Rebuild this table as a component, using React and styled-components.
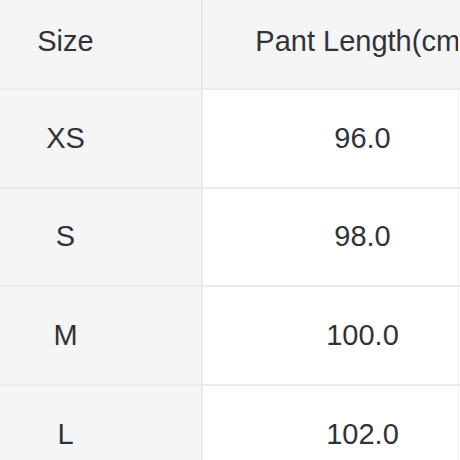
import { Fragment } from "react";
import styled, { createGlobalStyle } from "styled-components";

const GlobalStyle = createGlobalStyle`
  html, body {
    margin: 0;
    padding: 0;
    background: #ffffff;
    overflow: hidden;
  }
`;

const Viewport = styled.div`
  width: 460px;
  height: 460px;
  overflow: hidden;
`;

const SizeGrid = styled.div`
  display: grid;
  grid-template-columns: 271px 2px 255px 1px 60px;
  margin-left: -70px;
  width: 589px;
  font-family: "Liberation Sans", Arial, sans-serif;
  font-size: 29px;
  color: #31333b;
`;

const Cell = styled.div`
  display: flex;
  align-items: center;
  justify-content: center;
  height: ${(p) => (p.$head ? "88px" : "96.6px")};
  padding-bottom: ${(p) => (p.$head ? "6px" : "0")};
  padding-left: ${(p) => p.$shift || 0}px;
  box-sizing: border-box;
  white-space: nowrap;
  background: ${(p) => (p.$gray ? "#f5f5f6" : "#ffffff")};
`;

const VLine = styled.div`
  background: ${(p) => (p.$faint ? "#f1f1f2" : "#ebebec")};
`;

const HLine = styled.div`
  grid-column: 1 / -1;
  height: 2px;
  background: #ebebec;
`;

const rows = [
  { size: "XS", length: "96.0" },
  { size: "S", length: "98.0" },
  { size: "M", length: "100.0" },
  { size: "L", length: "102.0" },
];

const App = () => {
  return (
    <>
      <GlobalStyle />
      <Viewport>
        <SizeGrid>
          <Cell $head $gray>Size</Cell>
          <VLine />
          <Cell $head $gray $shift={64}>Pant Length(cm)</Cell>
          <VLine $faint />
          <Cell $head $gray />
          {rows.map((row) => (
            <Fragment key={row.size}>
              <HLine />
              <Cell $gray>{row.size}</Cell>
              <VLine />
              <Cell $shift={64}>{row.length}</Cell>
              <VLine $faint />
              <Cell />
            </Fragment>
          ))}
        </SizeGrid>
      </Viewport>
    </>
  );
};

export default App;
